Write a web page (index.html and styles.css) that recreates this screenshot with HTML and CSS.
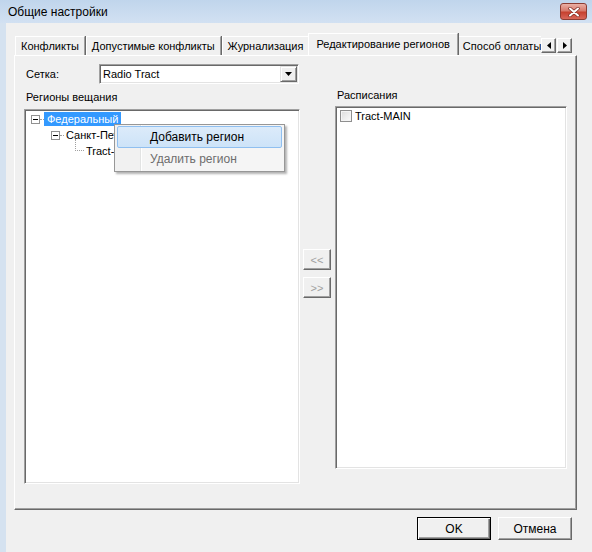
FILE: index.html
```html
<!DOCTYPE html>
<html lang="ru">
<head>
<meta charset="utf-8">
<title>Общие настройки</title>
<link rel="stylesheet" href="styles.css">
</head>
<body>
<div class="window">
  <div class="titlebar">
    <span class="title">Общие настройки</span>
    <div class="close">
      <svg width="12" height="10" viewBox="0 0 12 10">
        <path d="M2 1.5 L10 8.5 M10 1.5 L2 8.5" stroke="#7a2a22" stroke-width="3.4" stroke-linecap="round"/>
        <path d="M2 1.5 L10 8.5 M10 1.5 L2 8.5" stroke="#fff" stroke-width="2" stroke-linecap="round"/>
      </svg>
    </div>
  </div>
  <div class="client">
    <div class="tabstrip">
      <div class="tabs">
        <div class="tab">Конфликты</div>
        <div class="tab">Допустимые конфликты</div>
        <div class="tab">Журнализация</div>
        <div class="tab active">Редактирование регионов</div>
        <div class="tab">Способ оплаты</div>
      </div>
      <div class="tabscroll">
        <div class="arrowbtn"><svg width="4" height="7" viewBox="0 0 4 7"><polygon points="4,0 4,7 0,3.5" fill="#000"/></svg></div>
        <div class="arrowbtn"><svg width="4" height="7" viewBox="0 0 4 7"><polygon points="0,0 0,7 4,3.5" fill="#000"/></svg></div>
      </div>
    </div>
    <div class="panel">
      <div class="col-left">
        <div class="field-row">
          <span class="field-label">Сетка:</span>
          <div class="combo">
            <span class="combo-text">Radio Tract</span>
            <div class="combo-btn"><svg width="7" height="4" viewBox="0 0 7 4"><polygon points="0,0 7,0 3.5,4" fill="#000"/></svg></div>
          </div>
        </div>
        <div class="group-label">Регионы вещания</div>
        <div class="box tree">
          <div class="tree-row lvl1">
            <span class="expander"></span><span class="dots"></span><span class="node selected">Федеральный</span>
          </div>
          <div class="tree-row lvl2">
            <span class="expander"></span><span class="dots"></span><span class="node">Санкт-Петербург</span>
          </div>
          <div class="tree-row lvl3">
            <span class="elbow"></span><span class="node">Tract-MAIN</span>
          </div>
        </div>
      </div>
      <div class="col-mid">
        <div class="movebtn">&lt;&lt;</div>
        <div class="movebtn">&gt;&gt;</div>
      </div>
      <div class="col-right">
        <div class="group-label first">Расписания</div>
        <div class="box list">
          <div class="list-row"><span class="checkbox"></span><span>Tract-MAIN</span></div>
        </div>
      </div>
    </div>
    <div class="buttons">
      <div class="btn default">OK</div>
      <div class="btn">Отмена</div>
    </div>
  </div>
  <div class="menu">
    <div class="menu-item hover">Добавить регион</div>
    <div class="menu-item disabled">Удалить регион</div>
  </div>
</div>
</body>
</html>
```
FILE: styles.css
```css
* { box-sizing: border-box; }

body {
  margin: 0;
  width: 592px;
  height: 552px;
  overflow: hidden;
  background: #f0f0f0;
  color: #000;
  font: 11px "Liberation Sans", Arial, sans-serif;
}

.window {
  position: relative;
  width: 592px;
  height: 552px;
  display: flex;
  flex-direction: column;
}

.titlebar {
  height: 23px;
  flex: none;
  display: flex;
  align-items: center;
  padding-left: 8px;
  background: linear-gradient(#c0d5ec, #d2e1f2);
  font-size: 12px;
}

.title { flex: 1; }

.close {
  width: 27px;
  height: 17px;
  margin-right: 5px;
  border: 1px solid #8c3d33;
  border-radius: 3px;
  background: linear-gradient(#eab0a5, #d77a6c 45%, #c6412f 55%, #d8675a);
  display: flex;
  align-items: center;
  justify-content: center;
}

.client {
  flex: 1;
  display: flex;
  flex-direction: column;
  border-left: 6px solid #d5e2f0;
  padding-top: 10px;
}

.tabstrip {
  display: flex;
  height: 22px;
  margin-left: 8px;
  width: 563px;
}

.tabs {
  display: flex;
  align-items: flex-end;
  width: 527px;
  height: 22px;
  overflow: hidden;
  padding-left: 1px;
}

.tab {
  flex: none;
  height: 19px;
  padding: 0 5px;
  line-height: 19px;
  white-space: nowrap;
  border-top: 1px solid #fff;
  border-left: 1px solid #fff;
  border-right: 1px solid #a0a0a0;
  box-shadow: 1px 0 0 #696969;
  margin-right: 1px;
  background: #f0f0f0;
}

.tab.active {
  position: relative;
  z-index: 1;
  height: 22px;
  line-height: 20px;
  padding: 0 7px;
  margin: 0 -1px 0 -2px;
}

.tabscroll {
  display: flex;
  gap: 1px;
  margin-top: 5px;
  height: 15px;
}

.arrowbtn {
  width: 15px;
  height: 15px;
  border-top: 1px solid #fff;
  border-left: 1px solid #fff;
  border-right: 1px solid #696969;
  border-bottom: 1px solid #696969;
  box-shadow: inset -1px -1px #a0a0a0;
  display: flex;
  align-items: center;
  justify-content: center;
}

.panel {
  margin-left: 8px;
  width: 563px;
  height: 455px;
  border-top: 1px solid #fff;
  border-left: 1px solid #fff;
  border-right: 1px solid #696969;
  border-bottom: 1px solid #696969;
  box-shadow: inset -1px -1px #a0a0a0;
  padding-left: 9px;
  display: flex;
}

.col-left {
  width: 276px;
  padding-top: 8px;
  display: flex;
  flex-direction: column;
}

.field-row {
  display: flex;
  align-items: center;
  height: 20px;
}

.field-label {
  width: 75px;
  padding-left: 2px;
}

.combo {
  width: 200px;
  height: 20px;
  display: flex;
  align-items: center;
  background: #fff;
  border-top: 1px solid #a0a0a0;
  border-left: 1px solid #a0a0a0;
  border-right: 1px solid #fff;
  border-bottom: 1px solid #fff;
  box-shadow: inset 1px 1px #696969, inset -1px -1px #e3e3e3;
}

.combo-text {
  flex: 1;
  padding-left: 3px;
}

.combo-btn {
  width: 17px;
  height: 16px;
  margin-right: 1px;
  background: #f0f0f0;
  border-top: 1px solid #e3e3e3;
  border-left: 1px solid #e3e3e3;
  border-right: 1px solid #696969;
  border-bottom: 1px solid #696969;
  box-shadow: inset 1px 1px #fff, inset -1px -1px #a0a0a0;
  display: flex;
  align-items: center;
  justify-content: center;
}

.group-label {
  margin-top: 7px;
  line-height: 13px;
  padding-left: 2px;
}

.group-label.first { margin-top: 1px; }

.box {
  background: #fff;
  border-top: 1px solid #a0a0a0;
  border-left: 1px solid #a0a0a0;
  border-right: 1px solid #fff;
  border-bottom: 1px solid #fff;
  box-shadow: inset 1px 1px #696969, inset -1px -1px #e3e3e3;
}

.tree {
  margin-top: 5px;
  height: 375px;
  padding-top: 1px;
}

.tree-row {
  height: 16px;
  display: flex;
  align-items: center;
}

.lvl1 { padding-left: 6px; }
.lvl2 { padding-left: 26px; }
.lvl3 { padding-left: 50px; }

.expander {
  position: relative;
  width: 9px;
  height: 9px;
  border: 1px solid #919191;
  background: #fff;
  flex: none;
}

.expander::after {
  content: "";
  position: absolute;
  left: 1px;
  top: 3px;
  width: 5px;
  height: 1px;
  background: #000;
}

.dots {
  width: 4px;
  height: 1px;
  border-top: 1px dotted #a0a0a0;
  flex: none;
}

.elbow {
  width: 9px;
  height: 12px;
  align-self: flex-start;
  margin-top: -4px;
  border-left: 1px dotted #a0a0a0;
  border-bottom: 1px dotted #a0a0a0;
  flex: none;
}

.node {
  line-height: 14px;
  padding: 0 2px;
  white-space: nowrap;
}

.lvl1 .node { padding: 0 3px; }

.node.selected {
  background: #3399ff;
  color: #fff;
}

.col-mid {
  width: 28px;
  margin-left: 3px;
  padding-top: 193px;
  display: flex;
  flex-direction: column;
  gap: 7px;
}

.movebtn {
  width: 28px;
  height: 21px;
  border-top: 1px solid #fff;
  border-left: 1px solid #fff;
  border-right: 1px solid #696969;
  border-bottom: 1px solid #696969;
  box-shadow: inset -1px -1px #a0a0a0;
  color: #a0a0a0;
  display: flex;
  align-items: center;
  justify-content: center;
}

.col-right {
  width: 232px;
  margin-left: 4px;
  padding-top: 32px;
  display: flex;
  flex-direction: column;
}

.list {
  margin-top: 4px;
  height: 363px;
  padding: 2px 0 0 4px;
}

.list-row {
  display: flex;
  align-items: center;
  gap: 3px;
  height: 13px;
}

.checkbox {
  width: 12px;
  height: 12px;
  border: 1px solid #8f8f8f;
  background: linear-gradient(135deg, #dcdcdc, #fbfbfb);
  box-shadow: inset 0 0 0 1px #f4f4f4;
  flex: none;
}

.buttons {
  margin-top: 7px;
  display: flex;
  justify-content: flex-end;
  gap: 7px;
  padding-right: 20px;
}

.btn {
  width: 74px;
  height: 23px;
  display: flex;
  align-items: center;
  justify-content: center;
  border-top: 1px solid #fff;
  border-left: 1px solid #fff;
  border-right: 1px solid #696969;
  border-bottom: 1px solid #696969;
  box-shadow: inset -1px -1px #a0a0a0;
  font-size: 12px;
}

.btn.default {
  border: 1px solid #000;
  box-shadow: inset 1px 1px #fff, inset -1px -1px #696969, inset -2px -2px #a0a0a0;
}

.menu {
  position: absolute;
  left: 114px;
  top: 124px;
  width: 171px;
  height: 48px;
  padding: 1px 2px;
  border: 1px solid #979797;
  background: linear-gradient(to right, #f1f1f1 0 25px, #e2e3e3 25px 26px, #fff 26px 27px, #f5f5f5 27px);
  box-shadow: 2px 2px 2px rgba(0, 0, 0, 0.3);
  font-size: 12px;
}

.menu-item {
  height: 22px;
  line-height: 20px;
  padding-left: 32px;
  border: 1px solid transparent;
}

.menu-item.hover {
  background: linear-gradient(#dcebfa, #cde3f8);
  border-color: #8fbff0;
  border-radius: 2px;
}

.menu-item.disabled {
  color: #6d6d6d;
}
```
